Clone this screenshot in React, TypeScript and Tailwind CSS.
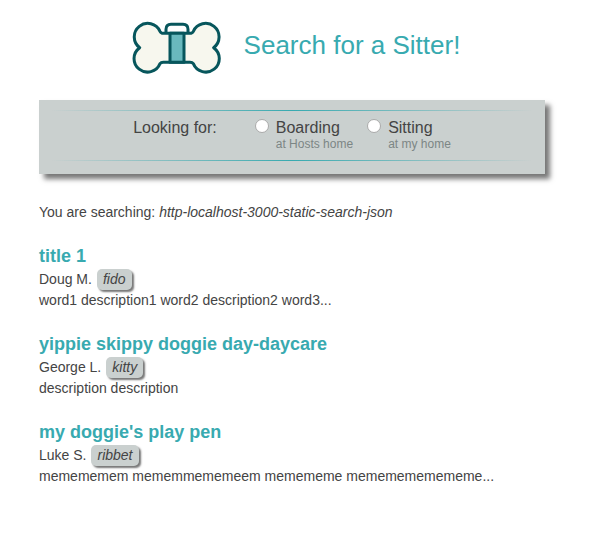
type Listing = { title: string; owner: string; pet: string; description: string };

const listings: Listing[] = [
  { title: "title 1", owner: "Doug M.", pet: "fido", description: "word1 description1 word2 description2 word3..." },
  { title: "yippie skippy doggie day-daycare", owner: "George L.", pet: "kitty", description: "description description" },
  { title: "my doggie's play pen", owner: "Luke S.", pet: "ribbet", description: "memememem mememmememeem memememe mememememememe..." },
];

const services = [
  { id: "boarding", label: "Boarding", hint: "at Hosts home" },
  { id: "sitting", label: "Sitting", hint: "at my home" },
];

function BoneLogo() {
  return (
    <svg viewBox="36 33 270 159" className="h-[53px] w-[90px] shrink-0" aria-hidden="true">
      <g stroke="#07565c" strokeWidth="9" strokeLinejoin="round">
        <path d="M138 70V58Q138 43 153 43H189Q204 43 204 58V70" fill="#fff" />
        <path
          d="M130 70Q123 70 120 64A40.4 40.4 0 1 0 59 113A40.4 40.4 0 1 0 120 161Q123 157 130 157H210Q217 157 220 161A40.4 40.4 0 1 0 281 113A40.4 40.4 0 1 0 220 64Q217 70 210 70Z"
          fill="#f7f7ee"
        />
        <path d="M150 70H192V157H150Z" fill="#69b9be" />
      </g>
    </svg>
  );
}

function Rule() {
  return <div className="h-px bg-linear-to-r from-transparent via-[#38aab0] to-transparent" />;
}

export default function App() {
  return (
    <main className="pt-[21px] pr-[69px] pb-12 pl-[39px] font-['Liberation_Sans',Arial,sans-serif] text-sm leading-[21px] text-[#444]">
      <header className="flex items-start justify-center gap-[22px] pl-2">
        <BoneLogo />
        <h1 className="pt-1 text-[26px] leading-10 text-[#38aab0]">Search for a Sitter!</h1>
      </header>

      <form className="mt-[26px] bg-[#cad0cf] px-3 pt-[10px] pb-[13px] shadow-[5px_5px_5px_#777]">
        <Rule />
        <div role="radiogroup" aria-labelledby="service-heading" className="flex justify-center pt-2 pb-[9px]">
          <span id="service-heading" className="mr-[38px] text-base leading-[18px]">
            Looking for:
          </span>
          <div className="flex gap-[14px]">
            {services.map((service) => (
              <div key={service.id} className="flex items-start gap-[7px]">
                <input
                  id={service.id}
                  type="radio"
                  name="service"
                  className="size-[14px] appearance-none rounded-full border border-[#aaa] bg-white checked:border-4 checked:border-[#38aab0]"
                />
                <label htmlFor={service.id} className="text-base leading-[18px]">
                  {service.label}
                  <small className="block text-xs leading-[14px] text-[#7c8685]">{service.hint}</small>
                </label>
              </div>
            ))}
          </div>
        </div>
        <Rule />
      </form>

      <p className="mt-7">
        You are searching: <em>http-localhost-3000-static-search-json</em>
      </p>

      {listings.map((listing) => (
        <article key={listing.title} className="mt-[22px]">
          <h2 className="pb-[2px] text-lg leading-[22px] font-bold text-[#38aab0]">{listing.title}</h2>
          <p className="flex gap-[5px]">
            {listing.owner}
            <em className="rounded-[5px] bg-[#cad0cf] px-[6px] shadow-[2px_2px_2px_#777]">{listing.pet}</em>
          </p>
          <p>{listing.description}</p>
        </article>
      ))}
    </main>
  );
}
